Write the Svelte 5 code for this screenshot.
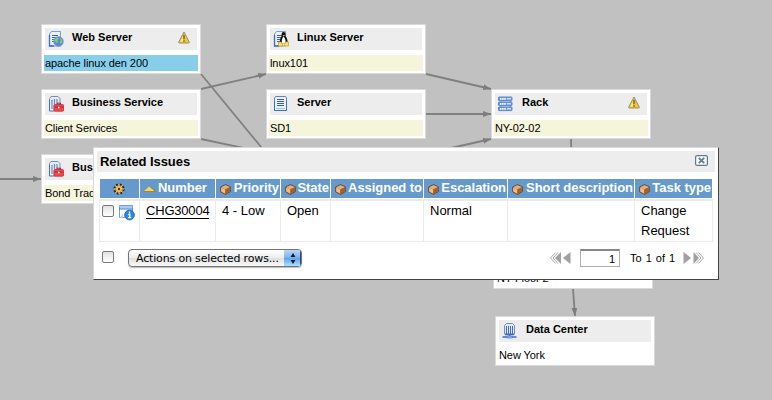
<script>
  const nodes = [
    { x: 41, y: 24, title: 'Web Server', label: 'apache linux den 200', icon: 'web', tone: 'blue', warn: true },
    { x: 41, y: 89, title: 'Business Service', label: 'Client Services', icon: 'business', tone: 'beige' },
    { x: 41, y: 154, title: 'Business Service', label: 'Bond Trading', icon: 'business', tone: 'beige' },
    { x: 266, y: 24, title: 'Linux Server', label: 'lnux101', icon: 'linux', tone: 'beige' },
    { x: 266, y: 89, title: 'Server', label: 'SD1', icon: 'server', tone: 'beige' },
    { x: 491, y: 89, title: 'Rack', label: 'NY-02-02', icon: 'rack', tone: 'beige', warn: true },
    { x: 493, y: 239, title: '', label: 'NY Floor 2', icon: 'center', tone: 'plain' },
    { x: 495, y: 316, title: 'Data Center', label: 'New York', icon: 'center', tone: 'plain' }
  ];
  const edges = [
    [201, 74, 350, 255],
    [201, 89, 266, 74],
    [201, 139, 300, 160],
    [426, 74, 491, 89],
    [426, 114, 491, 114],
    [420, 155, 491, 139],
    [571, 139, 573, 239],
    [573, 289, 575, 316],
    [0, 179, 41, 179]
  ];
  const columns = ['Priority', 'State', 'Assigned to', 'Escalation', 'Short description', 'Task type'];
  const values = ['4 - Low', 'Open', '', 'Normal', '', 'Change Request'];
</script>

{#snippet sheet()}
  <path d="M2.500 16V4L4.500 1.500H13.500V16Z" fill="#e9f1fb" stroke="#7f9cc6" />
  <path d="M2.500 5V16H7" fill="none" stroke="#3b6cc8" stroke-width="1.300" />
  <path d="M5 5.500H11M5 7.500H11M5 9.500H10M5 11.500H9" stroke="#3f609d" />
{/snippet}

{#snippet icon(kind)}
  <svg class="icon" width="17" height="17" viewBox="0 0 17 17">
    {#if kind === 'web'}
      {@render sheet()}
      <circle cx="11.500" cy="11.500" r="4.900" fill="#5b83e4" stroke="#8aa5e2" stroke-width=".7" />
      <path d="M8 9L10.500 7.300L12 8.500L10.500 10.500L11 12L9.500 13.500L8.500 11.500L7.200 11ZM13 8L15 9.500L15.500 12L13.500 14L12.500 12L13.500 10.500Z" fill="#7bd05e" />
    {:else if kind === 'linux'}
      {@render sheet()}
      <path d="M11.500 2C9.800 2 9.500 3.500 9.700 6C8 8.500 7.500 10.500 8 13.500H15.500C16 10.500 15 8 13.500 6C13.700 3.500 13.300 2 11.500 2Z" fill="#111" />
      <path d="M11.500 6.500C10 8 9.500 10.500 10 13.500H13.500C14 10.500 13 8 11.500 6.500Z" fill="#fff" />
      <path d="M10.500 5H13L11.800 6.600Z" fill="#f7c934" />
      <path d="M6.500 12H9L10.500 14V16H6.500ZM13.500 12H16.500V16H12.500V14.500Z" fill="#ffe26a" stroke="#d39a10" stroke-width=".7" />
    {:else if kind === 'server'}
      <path d="M3.500 1.500H13.500L14.500 3V15.500H2.500V3Z" fill="#eaf2fc" stroke="#6484b7" />
      <path d="M2.500 6V15.500H14.500V6" fill="none" stroke="#3c6ecb" />
      <path d="M5 4.500H12M5 6.500H12M5 8.500H12M5 10.500H12" stroke="#3e5f9d" />
      <path d="M4 13.500H13" stroke="#a9c5ee" />
    {:else if kind === 'rack'}
      <path d="M4 5.500V15M13.500 5.500V15" stroke="#8b9bb8" />
      {#each [2, 7, 12] as y}
        <rect x="1.500" y={y} width="13.500" height="3.600" rx=".6" fill="#6f9be2" stroke="#5b86d2" />
        <path d={`M3 ${y + 1.800}H9`} stroke="#fff" stroke-width="1.700" stroke-dasharray="1.500 .6" />
        <path d={`M10 ${y + 1.800}H14`} stroke="#fff" />
      {/each}
    {:else if kind === 'business'}
      <path d="M2.500 16V3.500L4 1.500H11L13 3.500V10" fill="#e5edf8" stroke="#7590b8" />
      <path d="M2.500 5V16H7" fill="none" stroke="#3b70cf" />
      <path d="M5 5V14M7.500 4V9M10 4V8" stroke="#6f88b4" stroke-width="1.200" />
      <path d="M10 9.500V8.200H13.500V9.500" fill="none" stroke="#b02731" stroke-width="1.100" />
      <rect x="6.900" y="9.500" width="9.600" height="6.700" rx="1" fill="#ee4a4c" stroke="#c02833" stroke-width=".8" />
      <path d="M7.500 12H16" stroke="#a81f2a" stroke-width=".8" />
      <path d="M11 12.500H12.500" stroke="#fff" stroke-width="1.600" />
    {:else}
      <path d="M3.500 12V3.500L5.500 1.500H11.500L13.500 3.500V12Z" fill="#dfebfb" stroke="#768fb9" />
      <path d="M5.500 4V12M7.500 4V12M9.500 4V12M11.500 4V12" stroke="#486eb5" />
      <path d="M4 12.500H13M8.500 12V14M1.500 15H15.500" stroke="#3c6cc4" stroke-width="1.400" />
      <rect x="6" y="14" width="5" height="2" fill="#8fb6f2" stroke="#4778cf" stroke-width=".6" />
    {/if}
  </svg>
{/snippet}

{#snippet cube()}
  <svg class="cube" width="11" height="11" viewBox="0 0 11 11">
    <path d="M5.500 .6L10.300 2.800V7.600L5.500 10.400L.7 7.800V3Z" fill="#bd7943" stroke="#5a3a22" stroke-width=".8" />
    <path d="M1.200 3.200L5.500 1.200L9.800 3L5 5.200Z" fill="#e4af7b" />
    <path d="M1.200 3.700L5 5.400V9.600L1.200 7.500Z" fill="#f0bd8b" />
    <path d="M5.500 5.400L9.800 3.500V7.300L5.500 9.700Z" fill="#a0602f" />
  </svg>
{/snippet}

<main>
  <svg class="edges" width="772" height="400" viewBox="0 0 772 400">
    <defs>
      <marker id="tip" markerWidth="8" markerHeight="6" refX="8" refY="3" orient="auto" markerUnits="userSpaceOnUse">
        <path d="M0 0L8 3L0 6Z" fill="#7d7d7d" />
      </marker>
    </defs>
    {#each edges as [x1, y1, x2, y2]}
      <line {x1} {y1} {x2} {y2} stroke="#808080" stroke-width="1.800" marker-end="url(#tip)" />
    {/each}
  </svg>

  {#each nodes as n}
    <section class="node" style={`left:${n.x}px;top:${n.y}px`}>
      <header>
        {@render icon(n.icon)}
        <b>{n.title}</b>
        {#if n.warn}
          <svg class="warn" width="12" height="13" viewBox="0 0 12 13">
            <path d="M6 1L11.300 11.200Q11.500 12 10.700 12H1.300Q.5 12 .7 11.200Z" fill="#fbc531" stroke="#86946f" stroke-linejoin="round" />
            <path d="M6 3L2.300 10.500H5L5.500 4Z" fill="#ffe98d" />
            <path d="M6 4V8.300M6 9.300V10.800" stroke="#6b4a12" stroke-width="1.200" />
          </svg>
        {/if}
      </header>
      <div class="label {n.tone}">{n.label}</div>
    </section>
  {/each}

  <div class="dialog">
    <div class="titlebar">
      <b>Related Issues</b>
      <svg width="13" height="11" viewBox="0 0 13 11">
        <rect x=".6" y=".6" width="11.800" height="9.800" rx="1.500" fill="#f8fafb" stroke="#637b88" stroke-width="1.200" />
        <path d="M3.800 2.800L9.200 8.200M9.200 2.800L3.800 8.200" stroke="#637b88" stroke-width="1.800" />
      </svg>
    </div>

    <div class="grid head">
      <div class="gear">
        <svg width="12" height="12" viewBox="0 0 12 12">
          <circle cx="6" cy="6" r="4.600" fill="none" stroke="#30230c" stroke-width="2" stroke-dasharray="2 1.610" />
          <circle cx="6" cy="6" r="3.600" fill="#f6bd54" stroke="#6d4510" stroke-width=".7" />
          <path d="M6 1V11M1 6H11M2.500 2.500L9.500 9.500M9.500 2.500L2.500 9.500" stroke="#f9c65e" stroke-width="1" />
          <circle cx="6" cy="6" r="1.200" fill="#4b3110" />
        </svg>
      </div>
      <div class="sorted">
        <svg width="13" height="6" viewBox="0 0 13 6">
          <path d="M6.500 .3L12.700 5.700H.3Z" fill="#f8d65e" />
          <path d="M.3 5.500H12.700L6.500 .3" fill="none" stroke="#8b762e" stroke-width=".8" />
        </svg>
        <span>Number</span>
      </div>
      {#each columns as c}
        <div>{@render cube()}<span>{c}</span></div>
      {/each}
    </div>

    <div class="grid row">
      <div class="tools">
        <i class="check"></i>
        <svg width="17" height="17" viewBox="0 0 17 17">
          <path d="M1.500 1.500H14.500V8M8 13.500H1.500V1.500" fill="#fff" stroke="#6c9fe0" />
          <path d="M2 2H14V4.500H2Z" fill="#a9cdf7" />
          <path d="M1 5H15" stroke="#3e77cb" />
          <path d="M2 14L5 9V13.500Z" fill="#bdd7f7" />
          <circle cx="11.500" cy="11" r="4.900" fill="#2e87e5" stroke="#1560bb" stroke-width=".8" />
          <path d="M11.500 7.600V9.200M10.200 10.500H11.800V13.500M10 13.700H13.300" fill="none" stroke="#fff" stroke-width="1.300" />
        </svg>
      </div>
      <div class="number"><span>CHG30004</span></div>
      {#each values as v}
        <div>{v}</div>
      {/each}
    </div>

    <div class="footer">
      <i class="check"></i>
      <div class="select">
        <span>Actions on selected rows...</span>
        <div class="knob">
          <svg width="6" height="11" viewBox="0 0 6 11">
            <path d="M3 0L5.400 4H.6ZM3 11L.6 7H5.400Z" fill="#101820" />
          </svg>
        </div>
      </div>
      <div class="pager">
        <svg width="21" height="12" viewBox="0 0 21 12">
          <path d="M5.500 .5L.5 6L5.500 11.500M8 .5L3 6L8 11.500" fill="none" stroke="#aaa" />
          <path d="M11 0V12L5 6ZM20.500 0V12L13 6Z" fill="#a0a0a4" />
        </svg>
        <div class="page">1</div>
        <span>To 1 of 1</span>
        <svg width="21" height="12" viewBox="0 0 21 12">
          <path d="M.5 0V12L8 6ZM10.500 0V12L16 6Z" fill="#a0a0a4" />
          <path d="M13 .5L18 6L13 11.500M15.500 .5L20.500 6L15.500 11.500" fill="none" stroke="#aaa" />
        </svg>
      </div>
    </div>
  </div>
</main>

<style>
  :global(body) { background: #c1c1c1; }
  main {
    position: relative;
    width: 772px;
    height: 400px;
    overflow: hidden;
    background: #c1c1c1;
    font-family: 'Liberation Sans', Arial, sans-serif;
    color: #000;
  }
  svg { display: block; flex: none; }
  .edges { position: absolute; left: 0; top: 0; }
  .node {
    position: absolute;
    box-sizing: border-box;
    width: 160px;
    height: 50px;
    padding: 3px 2px 2px;
    border: 1px solid #dadada;
    background: #fff;
  }
  .node header {
    display: flex;
    align-items: flex-start;
    height: 22px;
    margin: 0 1px;
    padding-left: 2px;
    background: #ededed;
  }
  .icon { margin-top: 2px; }
  .node b { margin: 2px 0 0 8px; font-size: 11px; line-height: 15px; white-space: nowrap; }
  .warn { margin: 3px 7px 0 auto; }
  .label {
    height: 16px;
    margin-top: 5px;
    padding-left: 1px;
    font-size: 11px;
    line-height: 17px;
    letter-spacing: -.08px;
    white-space: nowrap;
  }
  .blue { background: #87ceeb; }
  .beige { background: #f5f5dc; }
  .dialog {
    position: absolute;
    left: 93px;
    top: 147px;
    box-sizing: border-box;
    width: 626px;
    height: 133px;
    padding: 3px;
    border: 1px solid #d8d8d8;
    border-right-color: #444;
    border-bottom-color: #444;
    background: #fff;
  }
  .titlebar {
    display: flex;
    align-items: center;
    justify-content: space-between;
    height: 21px;
    padding: 0 7px 0 3px;
    background: #ededed;
    font-size: 13px;
    line-height: 21px;
  }
  .titlebar b { letter-spacing: -.07px; }
  .titlebar svg { margin-top: -2px; }
  .grid {
    display: grid;
    grid-template-columns: 39px 75px 64px 49px 92px 83px 126px 77px;
    column-gap: 1px;
    width: 612px;
    margin-left: 3px;
    font-size: 13px;
  }
  .head { height: 19px; margin-top: 7px; color: #fff; font-weight: bold; }
  .head > div {
    display: flex;
    align-items: center;
    justify-content: space-between;
    padding: 0 1px 0 4px;
    background: #6699cc;
    line-height: 17px;
    letter-spacing: -.04px;
    white-space: nowrap;
  }
  .head span { margin-top: -2px; }
  .head .gear { justify-content: center; padding: 0 1px 0 0; }
  .head .sorted { justify-content: flex-start; gap: 2px; padding-left: 3px; }
  .cube { margin-top: 2px; }
  .row {
    box-sizing: border-box;
    height: 43px;
    margin-top: 1px;
    margin-left: 2px;
    width: 614px;
    border: 1px solid #ebebeb;
    border-width: 2px 1px 1px;
    line-height: 20px;
  }
  .row > div { padding: 0 0 0 6px; }
  .row > div + div { box-shadow: -1px 0 #ebebeb; }
  .row .tools { display: flex; padding: 3px 0 0 2px; }
  .tools svg { margin: 0 0 0 4px; }
  .tools .check { margin-top: 1px; }
  .row .number span { border-bottom: 1px solid #000; letter-spacing: -.2px; }
  .check {
    box-sizing: border-box;
    width: 12px;
    height: 12px;
    border: 1px solid #777;
    border-radius: 2px;
    background: linear-gradient(#e2e2e2, #fff);
  }
  .footer { display: flex; align-items: flex-start; padding: 6px 11px 0 5px; height: 26px; }
  .footer .check { margin-top: 3px; }
  .select {
    display: flex;
    align-items: center;
    box-sizing: border-box;
    width: 174px;
    height: 18px;
    margin: 1px 0 0 14px;
    border: 1px solid #747474;
    border-radius: 4px;
    background: linear-gradient(#fff, #ececec 50%, #dedede 51%, #fafafa);
    box-shadow: 0 1px 1px #bbb;
    overflow: hidden;
    font: 11px 'DejaVu Sans', sans-serif;
    white-space: nowrap;
  }
  .select span { width: 148px; padding-left: 7px; letter-spacing: -.16px; }
  .knob {
    display: flex;
    align-items: center;
    justify-content: center;
    width: 17px;
    height: 18px;
    background: linear-gradient(#c4dcf6, #76b0ee 50%, #5ba2ec 51%, #b5eaff);
    box-shadow: inset -1px 0 #34498c;
  }
  .pager { display: flex; align-items: center; margin: 1px 0 0 auto; font-size: 11px; }
  .page {
    box-sizing: border-box;
    width: 40px;
    height: 18px;
    margin: 0 10px 0 9px;
    padding-right: 4px;
    border: 1px solid #b0b0b0;
    border-top: 2px solid #888;
    text-align: right;
    line-height: 16px;
  }
  .pager span { width: 53px; word-spacing: 1px; white-space: nowrap; }
</style>
